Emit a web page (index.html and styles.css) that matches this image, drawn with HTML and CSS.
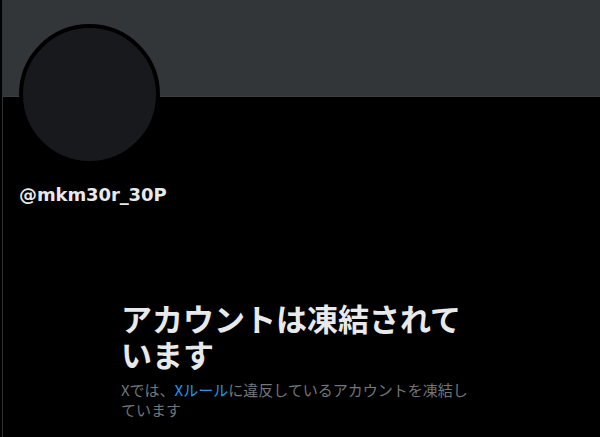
FILE: index.html
```html
<!DOCTYPE html>
<html lang="ja">
<head>
<meta charset="utf-8">
<link rel="stylesheet" href="styles.css">
</head>
<body>
<div class="column">
  <div class="banner"></div>
  <div class="profile">
    <div class="avatar"></div>
    <div class="handle">@mkm30r_30P</div>
  </div>
  <div class="empty">
    <h1 class="title">アカウントは凍結されています</h1>
    <p class="desc">Xでは、<span class="link">Xルール</span>に違反しているアカウントを凍結しています</p>
  </div>
</div>
</body>
</html>
```
FILE: styles.css
```css
html, body {
  margin: 0;
  padding: 0;
  background: #000;
  height: 100%;
  overflow: hidden;
}
.column {
  margin-left: 2px;
  border-left: 1px solid #2f3336;
  min-height: 100%;
  font-family: "Noto Sans CJK JP", "DejaVu Sans", sans-serif;
}
.banner {
  height: 96px;
  background: #333639;
  border-bottom: 1px solid #3a3e41;
}
.profile {
  padding: 0 16px;
}
.avatar {
  width: 133px;
  height: 133px;
  margin-top: -73px;
  border-radius: 50%;
  border: 4px solid #000;
  background: #18191c;
}
.handle {
  margin-top: 20px;
  font-family: "DejaVu Sans", sans-serif;
  font-weight: bold;
  font-size: 18px;
  line-height: 20px;
  color: #e7e9ea;
  letter-spacing: -0.1px;
}
.empty {
  width: 358px;
  margin: 95px 0 0 118px;
}
.title {
  margin: 0;
  font-size: 31px;
  line-height: 36px;
  font-weight: 700;
  color: #e7e9ea;
}
.desc {
  margin: 8px 0 0;
  font-size: 15px;
  line-height: 20px;
  color: #71767b;
}
.link {
  color: #1d9bf0;
}
```
